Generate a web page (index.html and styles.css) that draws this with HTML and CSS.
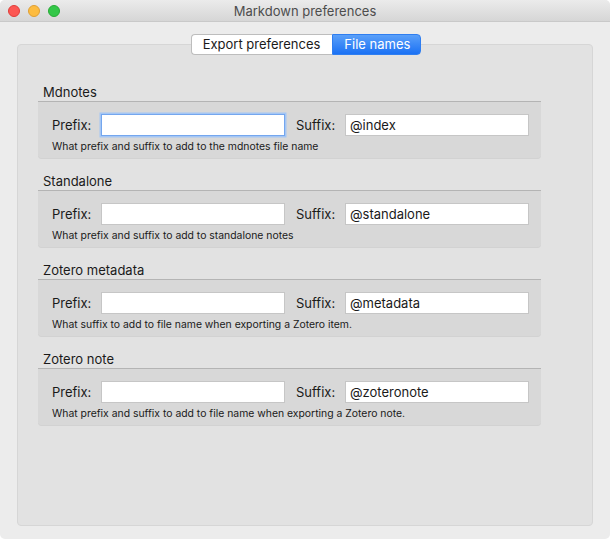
FILE: index.html
```html
<!DOCTYPE html>
<html>
<head>
<meta charset="utf-8">
<link rel="stylesheet" href="styles.css">
</head>
<body>
<div class="window">
  <div class="titlebar">
    <div class="lights">
      <span class="light red"></span>
      <span class="light yellow"></span>
      <span class="light green"></span>
    </div>
    <div class="title">Markdown preferences</div>
  </div>
  <div class="content">
    <div class="tabs">
      <div class="tab">Export preferences</div>
      <div class="tab active">File names</div>
    </div>
    <div class="panel">
      <div class="group">
        <div class="group-title">Mdnotes</div>
        <div class="group-box">
          <div class="row">
            <span class="label">Prefix:</span>
            <div class="field focus"></div>
            <span class="label suffix">Suffix:</span>
            <div class="field">@index</div>
          </div>
          <div class="desc">What prefix and suffix to add to the mdnotes file name</div>
        </div>
      </div>
      <div class="group">
        <div class="group-title">Standalone</div>
        <div class="group-box">
          <div class="row">
            <span class="label">Prefix:</span>
            <div class="field"></div>
            <span class="label suffix">Suffix:</span>
            <div class="field">@standalone</div>
          </div>
          <div class="desc">What prefix and suffix to add to standalone notes</div>
        </div>
      </div>
      <div class="group">
        <div class="group-title">Zotero metadata</div>
        <div class="group-box">
          <div class="row">
            <span class="label">Prefix:</span>
            <div class="field"></div>
            <span class="label suffix">Suffix:</span>
            <div class="field">@metadata</div>
          </div>
          <div class="desc">What suffix to add to file name when exporting a Zotero item.</div>
        </div>
      </div>
      <div class="group">
        <div class="group-title">Zotero note</div>
        <div class="group-box">
          <div class="row">
            <span class="label">Prefix:</span>
            <div class="field"></div>
            <span class="label suffix">Suffix:</span>
            <div class="field">@zoteronote</div>
          </div>
          <div class="desc">What prefix and suffix to add to file name when exporting a Zotero note.</div>
        </div>
      </div>
    </div>
  </div>
</div>
</body>
</html>
```
FILE: styles.css
```css
* { box-sizing: border-box; }
html, body {
  margin: 0;
  padding: 0;
  background: #ffffff;
}
body {
  font-family: "Inter", "Noto Sans", "Liberation Sans", sans-serif;
  font-size: 13px;
  color: #222;
}
.window {
  width: 610px;
  height: 539px;
  background: #ececec;
  border-radius: 5px;
  overflow: hidden;
}
.titlebar {
  height: 22px;
  background: linear-gradient(#ebebeb, #d6d6d6);
  border-bottom: 1px solid #c9c9c9;
  display: flex;
  align-items: center;
  justify-content: center;
  position: relative;
}
.lights {
  position: absolute;
  left: 8px;
  top: 5px;
  display: flex;
  gap: 8px;
}
.light {
  width: 12px;
  height: 12px;
  border-radius: 50%;
  display: block;
}
.red { background: #fc5753; border: 1px solid #df3d39; }
.yellow { background: #fdbc40; border: 1px solid #de9f34; }
.green { background: #33c748; border: 1px solid #27aa35; }
.title {
  font-size: 13px;
  color: #4d4d4d;
  line-height: 22px;
}
.content {
  padding: 12px 17px 0 17px;
}
.tabs {
  display: flex;
  justify-content: center;
  position: relative;
  z-index: 1;
  height: 21px;
  padding-left: 2px;
}
.tab {
  height: 21px;
  line-height: 19px;
  padding: 0 12px 0 11px;
  background: #ffffff;
  border: 1px solid #bdbdbd;
  border-right: none;
  border-radius: 4px 0 0 4px;
  color: #1a1a1a;
  font-size: 13px;
}
.tab.active {
  background: linear-gradient(#5aa0f9, #1b71f4);
  border: 1px solid #2f7ef0;
  border-radius: 0 4px 4px 0;
  color: #fff;
  padding: 0 10px 0 11px;
}
.panel {
  margin-top: -11px;
  height: 482px;
  background: #e2e2e2;
  border: 1px solid #d6d6d6;
  border-radius: 4px;
  padding: 39px 0 0 20px;
}
.group {
  width: 503px;
  margin-bottom: 14px;
}
.group-title {
  height: 17px;
  line-height: 17px;
  padding-left: 5px;
  font-size: 13px;
  color: #1a1a1a;
}
.group-box {
  background: #d8d8d8;
  border-top: 1px solid #b4b4b4;
  border-radius: 0 0 4px 4px;
  box-shadow: inset 0 -1px 0 #d2d2d2;
  padding: 12px 12px 5px 14px;
}
.row {
  display: flex;
  align-items: center;
  height: 22px;
}
.label {
  width: 49px;
  font-size: 13px;
  color: #1a1a1a;
}
.label.suffix {
  margin-left: 11px;
}
.field {
  width: 184px;
  height: 22px;
  background: #fff;
  border: 1px solid #c6c6c6;
  padding: 0 4px;
  line-height: 20px;
  font-size: 13px;
  color: #1a1a1a;
}
.field.focus {
  border: 1px solid #74a6ee;
  box-shadow: 0 0 0 1.5px #a4c6f4;
}
.desc {
  margin-top: 4px;
  line-height: 14px;
  font-size: 10.4px;
  color: #1a1a1a;
}
```
